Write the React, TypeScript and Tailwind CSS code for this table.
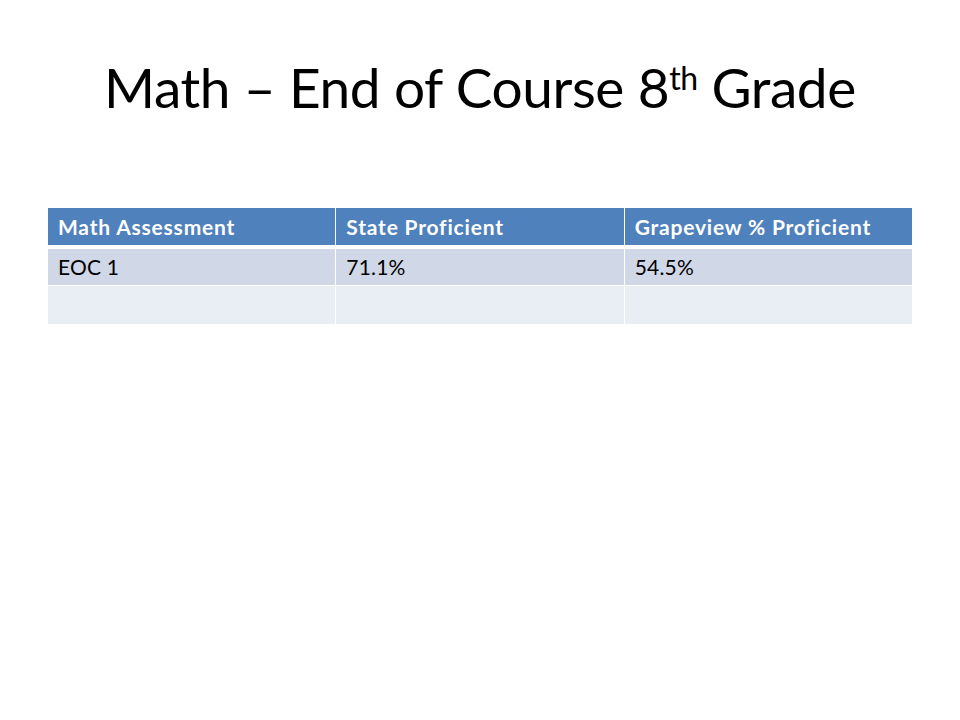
const headers = ['Math Assessment', 'State Proficient', 'Grapeview % Proficient']

const rows = [
  { cells: ['EOC 1', '71.1%', '54.5%'], bg: 'bg-[#d0d8e8]', h: 'h-[36px]' },
  { cells: ['', '', ''], bg: 'bg-[#e9edf4]', h: 'h-[38px]' },
]

export default function App() {
  return (
    <div
      className="h-[720px] w-[960px] bg-white text-black"
      style={{ fontFamily: 'Lato, "Open Sans", sans-serif' }}
    >
      {/* Title */}
      <div className="flex h-[180px] items-start justify-center pt-[52px]">
        <h1 className="text-[55px] leading-[70px] font-normal tracking-[-0.4px]">
          Math – End of Course 8
          <sup className="relative top-[1px] align-super text-[32px] leading-none">th</sup> Grade
        </h1>
      </div>

      {/* Table */}
      <div className="px-[48px] pt-[28px] text-[21px]">
        <div className="mb-[4px] grid grid-cols-3 gap-x-[1px] tracking-[0.8px]">
          {headers.map((h) => (
            <div
              key={h}
              className="flex h-[37px] items-center bg-[#4f81bd] px-[10px] font-bold text-white"
            >
              {h}
            </div>
          ))}
        </div>
        <div className="flex flex-col gap-[1px] tracking-[0.2px]">
          {rows.map((row, i) => (
            <div key={i} className="grid grid-cols-3 gap-x-[1px]">
              {row.cells.map((cell, j) => (
                <div key={j} className={`flex items-center px-[10px] ${row.h} ${row.bg}`}>
                  {cell}
                </div>
              ))}
            </div>
          ))}
        </div>
      </div>
    </div>
  )
}
